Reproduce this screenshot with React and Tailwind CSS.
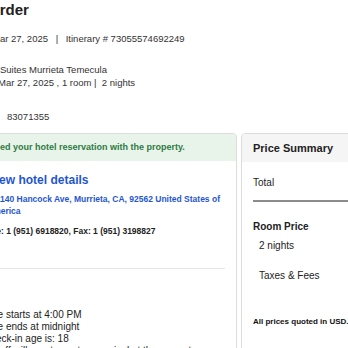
export default function App() {
  return (
    <div
      className="w-[348px] h-[348px] overflow-hidden bg-white text-[#333]"
      style={{ fontFamily: '"Liberation Sans", Arial, sans-serif' }}
    >
      {/* ── Order header ── */}
      <h1 className="pt-[1px] -ml-[12px] text-[15px] leading-[18px] font-bold text-[#222]">Order</h1>
      <p className="mt-[13px] -ml-[8px] text-[9.5px] leading-[13px] whitespace-nowrap">
        Mar 27, 2025 <span className="mx-[5px]">|</span> Itinerary # 73055574692249
      </p>

      <div className="mt-[18px] text-[9.5px] leading-[13px] whitespace-nowrap">
        <p>Suites Murrieta Temecula</p>
        <p className="-ml-[2px]">Mar 27, 2025 , 1 room |&nbsp; 2 nights</p>
      </div>

      <p className="mt-[21px] ml-[7px] text-[9.5px] leading-[13px]">83071355</p>

      {/* ── Cards row ── */}
      <div className="mt-[10px] -ml-[80px] flex gap-[4px] items-start">
        {/* Hotel card */}
        <div className="w-[317px] shrink-0 border border-[#dcdcdc] rounded-[4px] overflow-hidden">
          <div className="h-[27px] bg-[#e8f4ea] flex items-center pl-[80px]">
            <p className="-ml-[34px] text-[9px] font-bold text-[#2f7a45] whitespace-nowrap">
              confirmed your hotel reservation with the property.
            </p>
          </div>

          <div className="pl-[80px] pr-[11px]">
            <p className="mt-[12px] -ml-[13px] text-[12px] leading-[15px] font-bold text-[#1f56d0] whitespace-nowrap">
              View hotel details
            </p>
            <p className="mt-[5px] -ml-[10px] text-[8.5px] leading-[12px] font-bold text-[#1f56d0] whitespace-nowrap">
              41140 Hancock Ave, Murrieta, CA, 92562 United States of
            </p>
            <p className="-ml-[14px] text-[8.5px] leading-[12px] font-bold text-[#1f56d0]">America</p>
            <p className="mt-[8px] -ml-[26px] text-[8.5px] leading-[12px] font-bold text-[#222] whitespace-nowrap">
              Phone: 1 (951) 6918820, Fax: 1 (951) 3198827
            </p>

            <div className="mt-[31px] -ml-[80px] h-px bg-[#e6e6e6]" />

            <div className="-ml-[59px] text-[10px] leading-[12px] text-[#222] whitespace-nowrap">
              <p className="mt-[18px] text-[9px] leading-[15px] font-bold">Check-in</p>
              <div className="mt-[7px]">
                <p>Check-in time starts at 4:00 PM</p>
                <p>Check-in time ends at midnight</p>
                <p>Minimum check-in age is: 18</p>
                <p>Front desk staff will greet guests on arrival at the property</p>
              </div>
            </div>
          </div>
        </div>

        {/* Price summary card */}
        <div className="w-[170px] shrink-0 h-[260px] border border-[#dcdcdc] rounded-[4px] overflow-hidden">
          <div className="h-[28px] bg-[#f5f5f5] flex items-center px-[11px]">
            <p className="text-[11px] font-bold text-[#222]">Price Summary</p>
          </div>
          <div className="pl-[11px]">
            <p className="mt-[15px] text-[10px] leading-[12px] text-[#222]">Total</p>
            <div className="mt-[11px] h-[2px] bg-[#8c8c8c]" />
            <p className="mt-[19px] text-[10px] leading-[12px] font-bold text-[#222]">Room Price</p>
            <p className="mt-[7px] ml-[6px] text-[10px] leading-[12px] text-[#222]">2 nights</p>
            <p className="mt-[18px] ml-[6px] text-[10px] leading-[12px] text-[#222]">Taxes &amp; Fees</p>
            <p className="mt-[34px] text-[8px] leading-[11px] font-bold text-[#111] whitespace-nowrap">All prices quoted in USD.</p>
          </div>
        </div>
      </div>
    </div>
  )
}
